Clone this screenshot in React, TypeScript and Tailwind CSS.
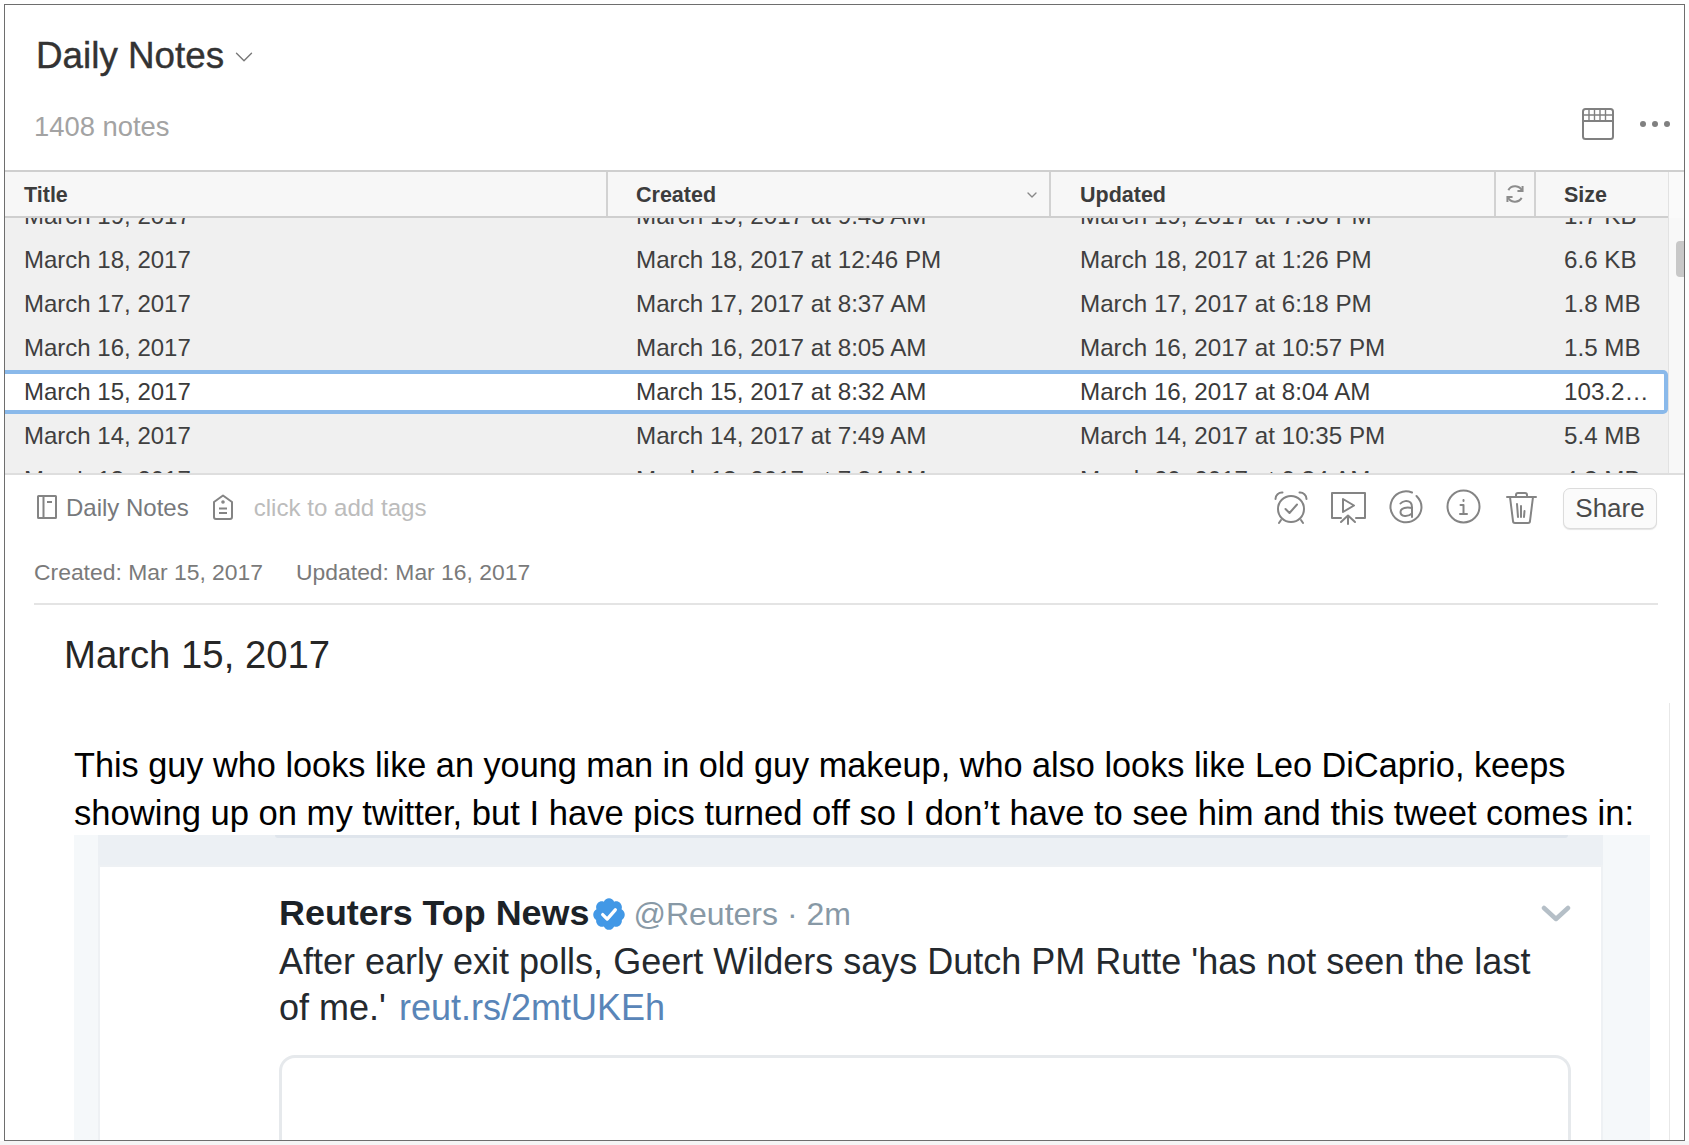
import { ChevronDown } from 'lucide-react';

const rows = [
  ['March 19, 2017', 'March 19, 2017 at 9:43 AM', 'March 19, 2017 at 7:36 PM', '1.7 KB'],
  ['March 18, 2017', 'March 18, 2017 at 12:46 PM', 'March 18, 2017 at 1:26 PM', '6.6 KB'],
  ['March 17, 2017', 'March 17, 2017 at 8:37 AM', 'March 17, 2017 at 6:18 PM', '1.8 MB'],
  ['March 16, 2017', 'March 16, 2017 at 8:05 AM', 'March 16, 2017 at 10:57 PM', '1.5 MB'],
  ['March 15, 2017', 'March 15, 2017 at 8:32 AM', 'March 16, 2017 at 8:04 AM', '103.2…'],
  ['March 14, 2017', 'March 14, 2017 at 7:49 AM', 'March 14, 2017 at 10:35 PM', '5.4 MB'],
  ['March 13, 2017', 'March 13, 2017 at 7:34 AM', 'March 20, 2017 at 9:34 AM', '4.3 MB'],
];

const iconStroke = '#848484';

const Row = ({ cells, selected }: { cells: string[]; selected?: boolean }) => (
  <div
    className={
      selected
        ? 'flex h-[44px] items-center rounded-r-[5px] border-y-[4px] border-r-[4px] border-[#8ab9ea] bg-white text-[#3a3a3a]'
        : 'flex h-[44px] items-center text-[#3f3f3f]'
    }
  >
    <div className="w-[631px] pl-[19px] text-[24px]">{cells[0]}</div>
    <div className="w-[444px]">{cells[1]}</div>
    <div className="w-[484px]">{cells[2]}</div>
    <div>{cells[3]}</div>
  </div>
);

const ToolIcon = ({ children }: { children: React.ReactNode }) => (
  <svg width="36" height="36" viewBox="0 0 36 36" fill="none" stroke={iconStroke} strokeWidth="2" strokeLinecap="round" strokeLinejoin="round">
    {children}
  </svg>
);

export default function App() {
  return (
    <div className="h-[1145px] w-[1689px] overflow-hidden bg-white px-[4px] pt-[4px] font-['Liberation_Sans',Arial,sans-serif]">
      <div className="flex h-[1137px] w-[1681px] flex-col overflow-hidden border border-[#6e6e6e] bg-white">
        {/* top header */}
        <div className="relative h-[165px] shrink-0">
          <div className="flex items-center pl-[31px] pt-[29px]">
            <span className="text-[36.8px] leading-[44px] text-[#333] [-webkit-text-stroke:0.4px_#333]">Daily Notes</span>
            <ChevronDown className="ml-[5px] mt-[2px] h-[30px] w-[30px] text-[#777]" strokeWidth={1.1} />
          </div>
          <div className="pl-[29px] pt-[32px] text-[27.4px] leading-[34px] text-[#a3a3a3]">1408 notes</div>
          <div className="absolute right-[14px] top-[103px] flex items-center gap-[26px]">
            <svg width="32" height="32" viewBox="0 0 32 32" fill="none" stroke="#808080" strokeWidth="2">
              <rect x="1" y="1" width="30" height="30" rx="2.5" />
              <path d="M1 13h30" />
              <path d="M1 7h30M7 1v12M12.500 1v12M18 1v12M23.500 1v12" strokeWidth="1.400" />
            </svg>
            <div className="flex gap-[6px]">
              <span className="h-[6px] w-[6px] rounded-full bg-[#808080]" />
              <span className="h-[6px] w-[6px] rounded-full bg-[#808080]" />
              <span className="h-[6px] w-[6px] rounded-full bg-[#808080]" />
            </div>
          </div>
        </div>

        {/* notes table */}
        <div className="flex h-[303px] shrink-0 flex-col overflow-hidden border-t-2 border-[#cfcfcf] bg-[#f0f0f0]">
          <div className="flex shrink-0">
            <div className="relative z-10 flex h-[46px] w-[1663px] items-end border-b-2 border-[#cfcfcf] bg-[#f7f7f7] text-[21.5px] font-bold text-[#3c3c3c]">
              <div className="flex h-full w-[603px] items-center border-r-2 border-[#d2d2d2] pl-[19px] pt-[2px]">Title</div>
              <div className="flex h-full w-[443px] items-center justify-between border-r-2 border-[#d2d2d2] pl-[28px] pr-[9px] pt-[2px]">
                Created
                <ChevronDown className="h-[16px] w-[16px] text-[#888]" strokeWidth={2} />
              </div>
              <div className="flex h-full w-[445px] items-center border-r-2 border-[#d2d2d2] pl-[29px] pt-[2px]">Updated</div>
              <div className="flex h-full w-[40px] items-center justify-center border-r-2 border-[#d2d2d2]">
                <svg width="20" height="20" viewBox="0 0 18 18" fill="none" stroke="#8c8c8c" strokeWidth="1.8">
                  <path d="M15.500 6.500A7 7 0 0 0 3 5.500M2.500 11.500A7 7 0 0 0 15 12.500" />
                  <path d="M15.800 1.800v4.600h-4.600M2.200 16.200v-4.600h4.600" />
                </svg>
              </div>
              <div className="flex h-full items-center pl-[28px] pt-[2px]">Size</div>
            </div>
            <div className="flex-1 border-l border-[#e2e2e2] bg-[#fafafa]" />
          </div>
          <div className="relative flex min-h-0 flex-1">
            <div className="-mt-[24px] w-[1663px] shrink-0 text-[24.2px]">
              {rows.map((r, i) => (
                <Row key={r[0]} cells={r} selected={i === 4} />
              ))}
            </div>
            <div className="flex-1 border-l border-[#e2e2e2] bg-[#f8f8f8] pl-[7px] pt-[23px]">
              <div className="h-[36px] w-[8px] rounded-l-[4px] bg-[#c8c8c8]" />
            </div>
          </div>
        </div>

        {/* note toolbar */}
        <div className="flex h-[68px] shrink-0 items-center border-t-2 border-[#dedede] pl-[32px] pr-[27px]">
          <svg className="-mt-[2px]" width="20" height="24" viewBox="0 0 20 24" fill="none" stroke={iconStroke} strokeWidth="2">
            <rect x="1" y="1" width="18" height="22" rx="0.5" />
            <path d="M6.500 1v22M10 7h5" />
          </svg>
          <span className="ml-[9px] text-[24px] text-[#77797c]">Daily Notes</span>
          <svg className="ml-[24px] -mt-[2px]" width="20" height="26" viewBox="0 0 20 26" fill="none" stroke={iconStroke} strokeWidth="2" strokeLinejoin="round">
            <path d="M10 1.500 19 8v15a2 2 0 0 1-2 2H3a2 2 0 0 1-2-2V8z" />
            <circle cx="10" cy="8" r="0.8" />
            <path d="M6 14.500h8M6 19h8" />
          </svg>
          <span className="ml-[21px] text-[24.1px] text-[#bcbcbc]">click to add tags</span>
          <div className="-mt-[2px] ml-auto flex items-center gap-[21.5px]">
            <ToolIcon>
              <circle cx="18" cy="20" r="13" />
              <path d="M12.500 20l4 4 7.500-8.500" />
              <path d="M2.500 10a6.500 6.500 0 0 1 7-6.500M33.500 10a6.500 6.500 0 0 0-7-6.500M8 31l-2 3M28 31l2 3" />
            </ToolIcon>
            <ToolIcon>
              <path d="M11 29H2V4h33v25h-9" />
              <path d="M13 10l11 6.500L13 23z" />
              <path d="M18 35V27M11 33l7-6.500 7 6.500" />
            </ToolIcon>
            <ToolIcon>
              <path d="M24 3.500A15.500 15.500 0 1 0 33.500 18c0-4-2-8-5-11" />
              <path d="M12.500 14.500c2-2.500 7-3.500 10-1 1.500 1.500 1.500 3 1.500 5v9.500" />
              <path d="M24 19c-5-1-11.500-.5-11.500 4 0 5 7.500 5 11.500 1.500" />
            </ToolIcon>
            <ToolIcon>
              <circle cx="18.500" cy="17.500" r="16" />
              <path d="M15.500 16h3v9M15 25h7M18.500 11v1" />
            </ToolIcon>
            <ToolIcon>
              <path d="M4 8h29M13 8V6a2 2 0 0 1 2-2h7a2 2 0 0 1 2 2v2" />
              <path d="M7 8l3 24a2 2 0 0 0 2 2h13a2 2 0 0 0 2-2l3-24" />
              <path d="M14 15l1 13M18 17v11M21.500 22l-.5 6" />
            </ToolIcon>
            <div className="ml-[3px] mt-[3px] flex h-[41px] w-[94px] items-center justify-center rounded-[7px] border border-[#dcdcdc] bg-[#fbfbfb] text-[26px] text-[#4a4a4a] shadow-[0_1px_1px_#e5e5e5]">
              Share
            </div>
          </div>
        </div>

        {/* note body */}
        <div className="relative min-h-0 flex-1 px-[29px]">
          <div className="absolute bottom-0 right-[14px] top-[162px] w-px bg-[#e8e8e8]" />
          <div className="flex h-[62px] gap-[33px] text-[22.9px] text-[#7a7a7a]">
            <span className="mt-[14px]">Created: Mar 15, 2017</span>
            <span className="mt-[14px]">Updated: Mar 16, 2017</span>
          </div>
          <div className="h-[2px] w-[1624px] bg-[#e4e4e4]" />
          <h1 className="ml-[30px] mt-[27px] text-[38.3px] leading-[46px] text-[#262626]">March 15, 2017</h1>
          <div className="ml-[40px] mt-[63px] w-[1590px] leading-[48px] text-black">
            <p className="whitespace-nowrap text-[34.28px]">This guy who looks like an young man in old guy makeup, who also looks like Leo DiCaprio, keeps</p>
            <p className="whitespace-nowrap text-[34.6px]">showing up on my twitter, but I have pics turned off so I don’t have to see him and this tweet comes in:</p>
          </div>
          {/* pasted tweet image */}
          <div className="-mt-[2px] ml-[40px] h-[400px] w-[1576px] bg-[#f5f8fa] pl-[24px]">
            <div className="h-[30px] w-[1505px] bg-[#ecf0f4]">
              <div className="ml-[177px] mr-[35px] h-[3px] rounded-b-[8px] bg-[#dfe5ec]" />
            </div>
            <div className="w-[1505px] border-x-2 border-t-2 border-[#eef1f4] bg-white pl-[179px] pr-[30px] pt-[25px]">
              <div className="flex h-[44px] items-center whitespace-nowrap">
                <span className="text-[35.9px] font-bold text-[#1c2227]">Reuters Top News</span>
                <svg className="ml-[2px]" width="36" height="36" viewBox="0 0 24 24">
                  <path fill="#4298e6" d="M22.500 12.500c0-1.580-.875-2.950-2.148-3.600.154-.435.238-.905.238-1.400 0-2.210-1.710-3.998-3.818-3.998-.470 0-.920.084-1.336.250C14.818 2.415 13.510 1.500 12 1.500s-2.816.917-3.437 2.250c-.415-.165-.866-.250-1.336-.250-2.110 0-3.818 1.790-3.818 4 0 .494.083.964.237 1.400-1.272.650-2.147 2.018-2.147 3.600 0 1.495.782 2.798 1.942 3.486-.020.170-.032.340-.032.514 0 2.210 1.708 4 3.818 4 .470 0 .920-.086 1.335-.250.620 1.334 1.926 2.250 3.437 2.250 1.512 0 2.818-.916 3.437-2.250.415.163.865.248 1.336.248 2.110 0 3.818-1.790 3.818-4 0-.174-.012-.344-.033-.513 1.158-.687 1.943-1.990 1.943-3.484z" />
                  <path d="M7.800 12.400l3 3 5.400-6.200" fill="none" stroke="#fff" strokeWidth="2.200" strokeLinecap="round" strokeLinejoin="round" />
                </svg>
                <span className="ml-[6px] text-[32px] text-[#8899a6]">@Reuters · 2m</span>
                <svg className="ml-auto" width="30" height="18" viewBox="0 0 30 18" fill="none" stroke="#b5bfc7" strokeWidth="4.500" strokeLinecap="round" strokeLinejoin="round">
                  <path d="M3 3l12 11L27 3" />
                </svg>
              </div>
              <p className="mt-[3px] text-[36px] leading-[45.5px] text-[#24292e]">
                After early exit polls, Geert Wilders says Dutch PM Rutte 'has not seen the last
                <br />
                of me.' <span className="ml-[3px] text-[#5985b8]">reut.rs/2mtUKEh</span>
              </p>
              <div className="mt-[25px] h-[200px] rounded-t-[16px] border-x-[3px] border-t-[3px] border-[#e6e9ec]" />
            </div>
          </div>
        </div>
      </div>
      <div className="-mx-[4px] h-[4px] bg-[#f5f5f5]" />
    </div>
  );
}
